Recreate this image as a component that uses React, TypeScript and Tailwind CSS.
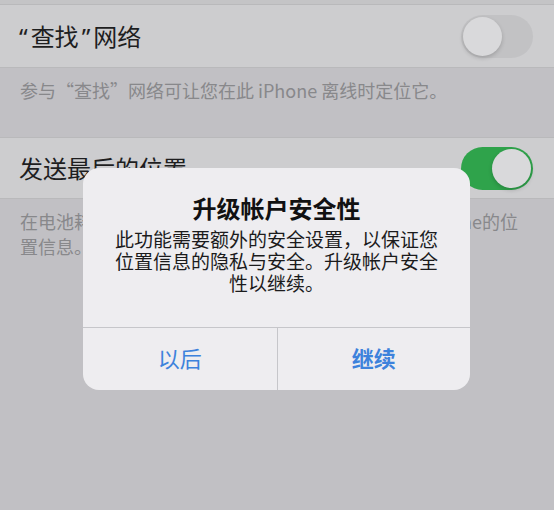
import React from "react";

function Toggle({ on }: { on: boolean }) {
  return (
    <div
      className={
        "relative w-[72px] h-[43px] rounded-full flex items-center px-[2px] " +
        (on ? "bg-[#2fa34b] justify-end" : "bg-[#c2c2c4] justify-start")
      }
    >
      <div className="w-[39px] h-[39px] rounded-full bg-[#d9d9db] shadow-[0_2px_4px_rgba(0,0,0,0.18)]" />
    </div>
  );
}

const cjk = { fontFamily: '"Noto Sans CJK SC", "Noto Sans", sans-serif' };

export default function App() {
  return (
    <div
      className="relative w-[554px] h-[510px] overflow-hidden bg-[#c1c0c4]"
      style={{ fontFamily: '"Noto Sans", "Noto Sans CJK SC", sans-serif' }}
    >
      <div className="h-[5px] bg-[#c4c4c6] border-b border-[#b9b9bb]" />

      <div className="h-[63px] bg-[#cdcdcf] border-b border-[#b9b9bb] flex items-center justify-between pl-[19px] pr-[21px]">
        <span className="text-[24px] leading-none text-[#1e1e1f] pt-[2px]">
          <span className="mr-[3px]">“</span>查找<span className="mx-[3px]">”</span>网络
        </span>
        <Toggle on={false} />
      </div>

      <div className="h-[69px] px-[20px] pt-[10px] text-[18px] leading-[24px] text-[#88888b]" style={cjk}>
        参与“查找”网络可让您在此 iPhone 离线时定位它。
      </div>

      <div className="h-[62px] bg-[#cdcdcf] border-y border-[#b9b9bb] flex items-center justify-between pl-[19px] pr-[21px]">
        <span className="text-[24px] leading-none text-[#1e1e1f] pt-[2px]">发送最后的位置</span>
        <Toggle on={true} />
      </div>

      <div className="px-[20px] pt-[10px] text-[18px] leading-[25px] text-[#88888b]" style={cjk}>
        <p className="flex justify-between pr-[16px] whitespace-nowrap">
          <span>在电池耗电量过低时自动发送此</span>
          <span>iPhone的位</span>
        </p>
        <p>置信息。</p>
      </div>

      {/* alert */}
      <div className="absolute left-[83px] top-[168px] w-[387px] h-[222px] rounded-[16px] bg-[#eeedf0] flex flex-col">
        <div className="flex-1 flex flex-col items-center pt-[27px] px-[12px] text-center">
          <div className="text-[24px] leading-[28px] font-semibold text-[#111112]">升级帐户安全性</div>
          <div
            className="mt-[5px] text-[19px] leading-[22px] text-[#1b1b1c] whitespace-nowrap"
            style={cjk}
          >
            此功能需要额外的安全设置，以保证您
            <br />
            位置信息的隐私与安全。升级帐户安全
            <br />
            性以继续。
          </div>
        </div>
        <div className="h-[63px] border-t border-[#c6c6ca] grid grid-cols-2">
          <div className="flex items-center justify-center pb-[1px] text-[22px] text-[#3d82dc]">以后</div>
          <div className="flex items-center justify-center pb-[1px] border-l border-[#c6c6ca] text-[22px] font-semibold text-[#3d82dc]">
            继续
          </div>
        </div>
      </div>
    </div>
  );
}
